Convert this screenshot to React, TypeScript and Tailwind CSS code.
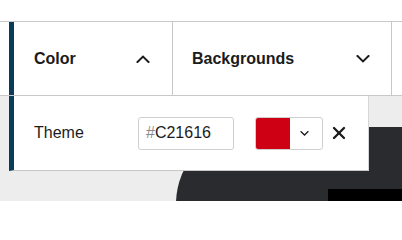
import { X } from "lucide-react";

function Chevron({ up = false, className = "" }: { up?: boolean; className?: string }) {
  return (
    <svg
      viewBox="0 0 14 8"
      className={className}
      fill="none"
      stroke="currentColor"
      strokeWidth={2}
      strokeLinecap="square"
    >
      {up ? <path d="M1.5 7L7 1.6L12.5 7" /> : <path d="M1.5 1L7 6.4L12.5 1" />}
    </svg>
  );
}

export default function App() {
  return (
    <div
      className="relative h-[201px] w-[402px] overflow-hidden bg-white text-[#1b1b1b]"
      style={{ fontFamily: '"Liberation Sans", Arial, sans-serif' }}
    >
      <div className="h-[21px]" />

      {/* Toolbar */}
      <div className="flex h-[75px] border-y border-[#c8c8c8] bg-white">
        <div className="w-[9px]" />
        <div className="flex w-[163px] items-center justify-between border-l-[5px] border-[#0c3b5a] pl-[20px] pr-[22px]">
          <span className="text-[16px] font-bold">Color</span>
          <Chevron up className="h-[8px] w-[14px]" />
        </div>
        <div className="flex w-[220px] items-center justify-between border-x border-[#c8c8c8] pl-[19px] pr-[21px]">
          <span className="text-[16px] font-bold">Backgrounds</span>
          <Chevron className="h-[8px] w-[14px]" />
        </div>
      </div>

      {/* Canvas area */}
      <div className="relative h-[105px] bg-[#ededed]">
        <div className="absolute left-[176px] top-[31px] h-[120px] w-[260px] rounded-tl-[77px] bg-[#2a2b2f]" />
        <div className="absolute left-[328px] top-[93px] h-[12px] w-[74px] bg-black" />

        <div className="relative z-10 ml-[9px] flex h-[75px] w-[360px] items-center border-b border-l-[5px] border-r border-b-[#c8c8c8] border-l-[#0c3b5a] border-r-[#d6d6d6] bg-white pl-[20px]">
          <span className="w-[104px] text-[16px]">Theme</span>
          <div className="flex h-[33px] w-[96px] items-center rounded-[3px] border border-[#cfcfcf] pl-[7px] text-[16px]">
            <span className="text-[#8a8a8a]">#</span>
            <span>C21616</span>
          </div>
          <div className="ml-[21px] flex h-[33px] w-[68px] overflow-hidden rounded-[3px] border border-[#cfcfcf]">
            <div className="-my-px -ml-px w-[35px] bg-[#cd0014]" />
            <div className="flex flex-1 items-center justify-center pr-[4px]">
              <Chevron className="h-[5px] w-[9px]" />
            </div>
          </div>
          <X className="ml-[6px] h-[20px] w-[20px]" strokeWidth={2.8} />
        </div>
      </div>
    </div>
  );
}
